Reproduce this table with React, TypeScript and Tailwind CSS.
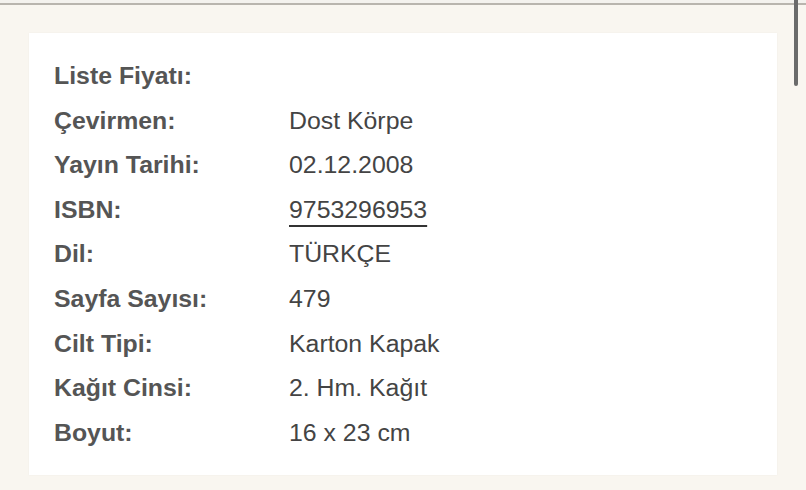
import React from "react";

const rows: { label: string; value: string; link?: boolean }[] = [
  { label: "Liste Fiyatı:", value: "" },
  { label: "Çevirmen:", value: "Dost Körpe" },
  { label: "Yayın Tarihi:", value: "02.12.2008" },
  { label: "ISBN:", value: "9753296953", link: true },
  { label: "Dil:", value: "TÜRKÇE" },
  { label: "Sayfa Sayısı:", value: "479" },
  { label: "Cilt Tipi:", value: "Karton Kapak" },
  { label: "Kağıt Cinsi:", value: "2. Hm. Kağıt" },
  { label: "Boyut:", value: "16 x 23 cm" },
];

export default function App() {
  return (
    <div
      className="relative w-[806px] h-[490px] overflow-hidden bg-[#f9f6f0]"
      style={{ fontFamily: '"Liberation Sans", Arial, sans-serif' }}
    >
      <div className="h-[3px] bg-[#f4f2ee]" />
      <div className="h-[2px] bg-[#b9b5ae]" />
      <div className="pt-[28px] pl-[29px] pr-[29px]">
        <div className="bg-white w-[748px] pt-[21px] pb-[20px] pl-[25px] shadow-[0_0_2px_rgba(0,0,0,0.04)]">
          {rows.map((r) => (
            <div key={r.label} className="flex h-[44.6px] items-center text-[23px] leading-[44.6px]">
              <div className="w-[235px] shrink-0">
                <span className="inline-block origin-left scale-x-[1.08] font-bold text-[#555555]">
                  {r.label}
                </span>
              </div>
              <div>
                {r.value && (
                  <span
                    className={
                      "inline-block origin-left scale-x-[1.08] text-[#444444] " +
                      (r.link ? "underline decoration-2 underline-offset-[7px] decoration-[#333]" : "")
                    }
                  >
                    {r.value}
                  </span>
                )}
              </div>
            </div>
          ))}
        </div>
      </div>
      <div className="absolute left-[794px] top-0 w-[4px] h-[86px] rounded-b-full bg-[#6b6b6b]" />
    </div>
  );
}
